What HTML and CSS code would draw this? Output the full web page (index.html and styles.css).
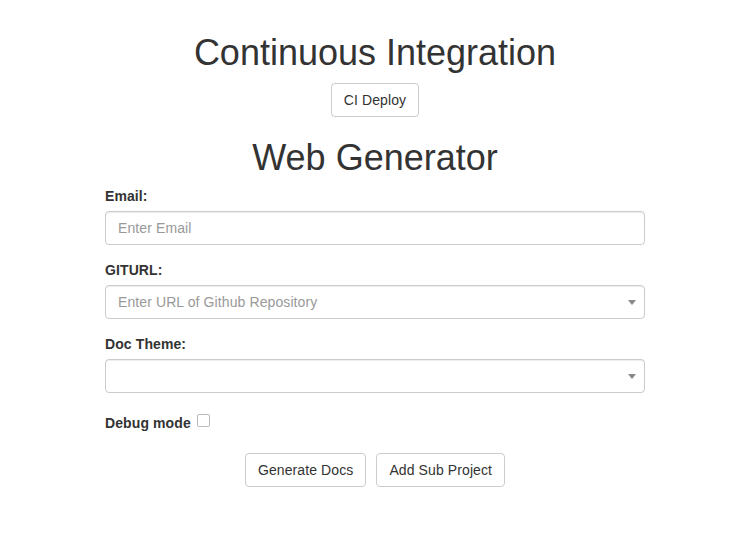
FILE: index.html
```html
<!DOCTYPE html>
<html>
<head>
<meta charset="utf-8">
<title>Web Generator</title>
<link rel="stylesheet" href="styles.css">
</head>
<body>
<div class="container">
  <h1 class="title title-first">Continuous Integration</h1>
  <div class="center-row deploy-row">
    <button class="btn" type="button">CI Deploy</button>
  </div>
  <h1 class="title title-second">Web Generator</h1>
  <form class="form">
    <div class="form-group">
      <label class="label">Email:</label>
      <div class="control"><span class="placeholder">Enter Email</span></div>
    </div>
    <div class="form-group">
      <label class="label">GITURL:</label>
      <div class="control select"><span class="placeholder">Enter URL of Github Repository</span><span class="arrow"></span></div>
    </div>
    <div class="form-group">
      <label class="label">Doc Theme:</label>
      <div class="control select"><span class="arrow"></span></div>
    </div>
    <div class="debug-row">
      <label class="label inline">Debug mode</label>
      <span class="checkbox"></span>
    </div>
    <div class="center-row actions">
      <button class="btn" type="button">Generate Docs</button>
      <button class="btn" type="button">Add Sub Project</button>
    </div>
  </form>
</div>
</body>
</html>
```

FILE: styles.css
```css
* { box-sizing: border-box; }
html, body { margin: 0; padding: 0; background: #fff; }
body {
  font-family: "Liberation Sans", Arial, sans-serif;
  font-size: 14px;
  line-height: 1.42857;
  color: #333;
  letter-spacing: 0.1px;
}
.container {
  width: 750px;
  padding: 0 105px;
}
.title {
  font-size: 36px;
  font-weight: 500;
  line-height: 1.1;
  text-align: center;
  margin: 0;
  color: #333;
  letter-spacing: 0;
}
.title-first { margin-top: 33px; }
.title-second { margin-top: 21px; margin-bottom: 9px; }
.center-row {
  display: flex;
  justify-content: center;
  gap: 10px;
}
.deploy-row { margin-top: 10px; }
.btn {
  font-family: inherit;
  font-size: 14px;
  letter-spacing: 0.1px;
  line-height: 20px;
  color: #333;
  background: #fff;
  border: 1px solid #ccc;
  border-radius: 4px;
  padding: 6px 12px;
  height: 34px;
  margin: 0;
}
.form-group { margin-bottom: 15px; }
.label {
  display: block;
  font-weight: bold;
  margin-bottom: 5px;
  line-height: 20px;
}
.control {
  position: relative;
  height: 34px;
  border: 1px solid #ccc;
  border-radius: 4px;
  padding: 6px 12px;
  line-height: 20px;
  box-shadow: inset 0 1px 1px rgba(0,0,0,.075);
  background: #fff;
}
.placeholder { color: #999; }
.arrow {
  position: absolute;
  right: 8px;
  top: 14px;
  width: 0;
  height: 0;
  border-style: solid;
  border-width: 5px 4px 0 4px;
  border-color: #888 transparent transparent transparent;
}
.debug-row {
  display: flex;
  align-items: flex-start;
  padding-top: 5px;
}
.label.inline { display: inline-block; margin: 0; }
.checkbox {
  width: 13px;
  height: 13px;
  border: 1px solid #bbb;
  border-radius: 2px;
  margin-left: 6px;
  margin-top: 1px;
  background: #fff;
}
.actions { margin-top: 20px; }
```
